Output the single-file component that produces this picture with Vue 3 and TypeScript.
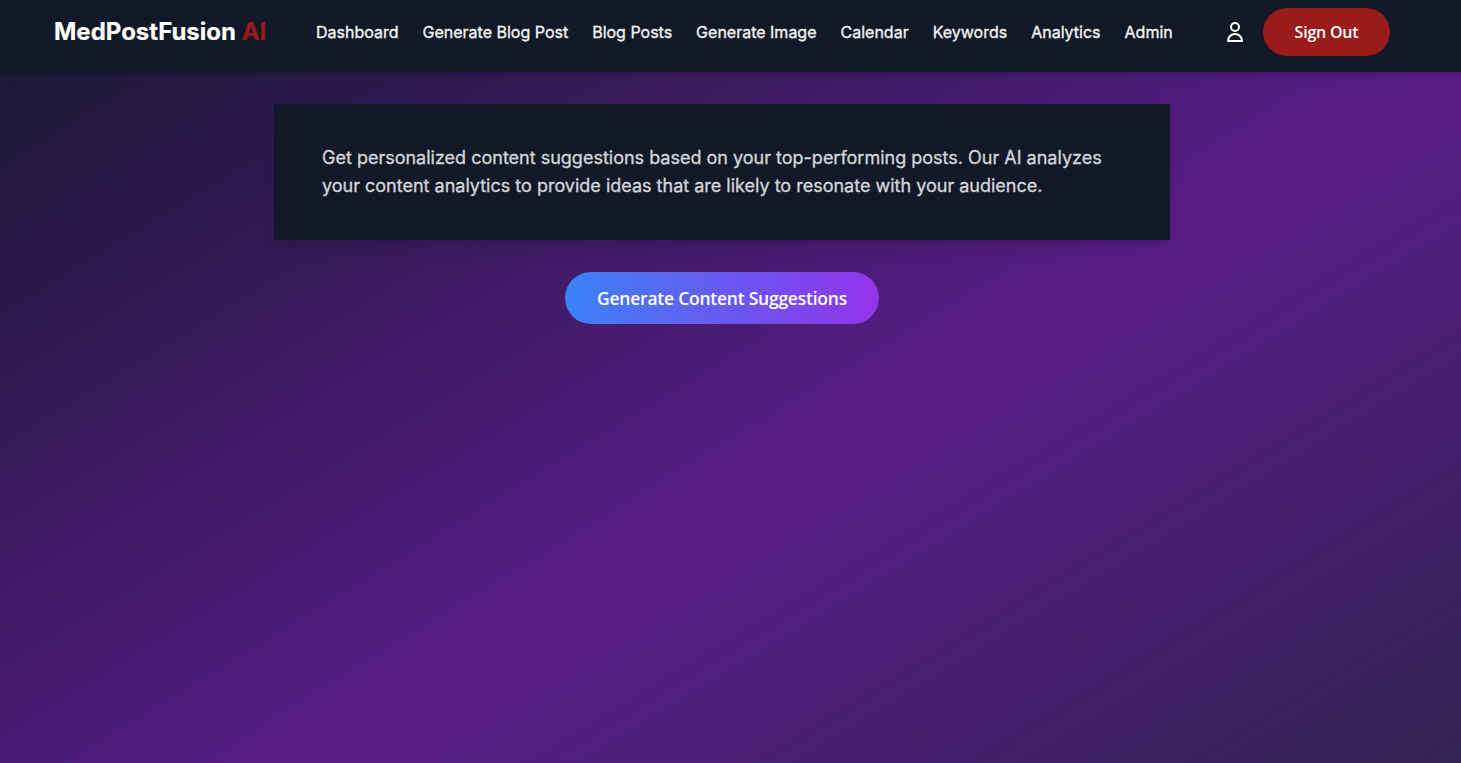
<template>
  <div class="page">
    <header class="navbar">
      <div class="navbar-inner">
        <a class="brand" href="#">MedPostFusion <span class="brand-accent">AI</span></a>

        <nav class="nav-links">
          <a v-for="link in links" :key="link" class="nav-link" href="#">{{ link }}</a>
        </nav>

        <div class="nav-actions">
          <a class="profile-link" href="#" aria-label="Profile">
            <svg class="profile-icon" viewBox="0 0 24 24" fill="none" stroke="currentColor" stroke-width="2">
              <path
                stroke-linecap="round"
                stroke-linejoin="round"
                d="M16 7a4 4 0 11-8 0 4 4 0 018 0zM12 14a7 7 0 00-7 7h14a7 7 0 00-7-7z"
              />
            </svg>
          </a>
          <button class="sign-out" type="button">Sign Out</button>
        </div>
      </div>
    </header>

    <main class="content">
      <section class="intro-card">
        <p class="intro-text">
          Get personalized content suggestions based on your top-performing posts. Our AI analyzes
          your content analytics to provide ideas that are likely to resonate with your audience.
        </p>
      </section>

      <button class="generate-button" type="button">Generate Content Suggestions</button>
    </main>
  </div>
</template>

<script setup lang="ts">
const links: string[] = [
  'Dashboard',
  'Generate Blog Post',
  'Blog Posts',
  'Generate Image',
  'Calendar',
  'Keywords',
  'Analytics',
  'Admin'
]
</script>

<style>
body {
  margin: 0;
}
</style>

<style scoped>
.page {
  box-sizing: border-box;
  height: 100vh;
  padding-right: 17px;
  font-family: Inter, 'Open Sans', sans-serif;
  background: linear-gradient(148.6deg, #111827 -85px, #581c87 820px, #1f2937 1720px);
}

.navbar {
  box-sizing: border-box;
  height: 72px;
  margin-right: -17px;
  padding: 8px 71px 16px 54px;
  background: #111827;
  box-shadow: 0 4px 6px -1px rgba(0, 0, 0, 0.1), 0 2px 4px -1px rgba(0, 0, 0, 0.06);
}

.navbar-inner {
  display: flex;
  align-items: center;
  height: 48px;
}

.brand {
  width: 262px;
  flex-shrink: 0;
  font-size: 24px;
  font-weight: 700;
  line-height: 32px;
  white-space: nowrap;
  color: #fff;
  text-decoration: none;
  -webkit-text-stroke: 0.2px currentColor;
}

.brand-accent {
  color: #991b1b;
}

.nav-links {
  display: flex;
  gap: 24px;
}

.nav-link {
  font-size: 16px;
  font-weight: 400;
  line-height: 24px;
  white-space: nowrap;
  color: #f3f4f6;
  text-decoration: none;
  -webkit-text-stroke: 0.35px currentColor;
}

.nav-actions {
  display: flex;
  align-items: center;
  gap: 16px;
  margin-left: auto;
}

.profile-link {
  display: flex;
  color: #fff;
}

.profile-icon {
  width: 24px;
  height: 24px;
}

.sign-out {
  width: 127px;
  height: 48px;
  padding: 0;
  border: none;
  border-radius: 24px;
  font-family: 'Open Sans', sans-serif;
  font-size: 16px;
  font-weight: 600;
  letter-spacing: -0.2px;
  color: #fff;
  background: #991b1b;
}

.content {
  display: flex;
  flex-direction: column;
  align-items: center;
  gap: 32px;
  padding-top: 32px;
}

.intro-card {
  box-sizing: border-box;
  width: 896px;
  height: 136px;
  padding: 40px 48px;
  background: #111827;
  box-shadow: 0 10px 15px -3px rgba(0, 0, 0, 0.1), 0 4px 6px -2px rgba(0, 0, 0, 0.05);
}

.intro-text {
  margin: 0;
  font-size: 18px;
  font-weight: 400;
  line-height: 28px;
  color: #d1d5db;
  -webkit-text-stroke: 0.35px currentColor;
}

.generate-button {
  width: 314px;
  height: 52px;
  padding: 0;
  border: none;
  border-radius: 26px;
  font-family: 'Open Sans', sans-serif;
  font-size: 17.5px;
  font-weight: 600;
  letter-spacing: -0.24px;
  color: #fff;
  background: linear-gradient(to right, #3b82f6, #9333ea);
}
</style>
